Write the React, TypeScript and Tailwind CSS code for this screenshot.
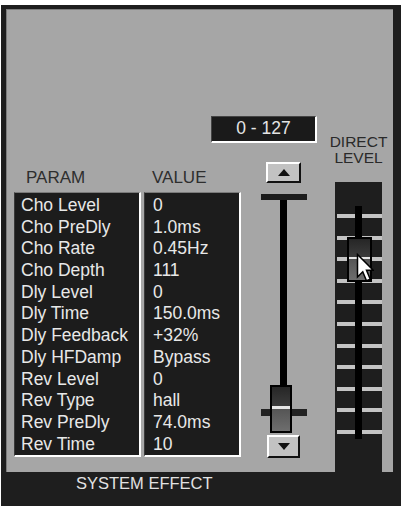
import React from "react";

const rows: [string, string][] = [
  ["Cho Level", "0"],
  ["Cho PreDly", "1.0ms"],
  ["Cho Rate", "0.45Hz"],
  ["Cho Depth", "111"],
  ["Dly Level", "0"],
  ["Dly Time", "150.0ms"],
  ["Dly Feedback", "+32%"],
  ["Dly HFDamp", "Bypass"],
  ["Rev Level", "0"],
  ["Rev Type", "hall"],
  ["Rev PreDly", "74.0ms"],
  ["Rev Time", "10"],
];

const ticks = [32, 54, 76, 98, 119, 141, 162, 183, 205, 227, 248];

const font = "font-['Liberation_Sans',Arial,sans-serif]";
const listBox =
  "h-[265px] pt-[2px] bg-[#1c1c1c] border-t border-l border-t-[#7a7a7a] border-l-[#3a3a3a] border-b-2 border-r-2 border-b-white border-r-white";
const button =
  "flex items-center justify-center bg-[#c2c2c2] border-t-2 border-l-2 border-t-white border-l-white border-b-2 border-r-2 border-b-[#111] border-r-[#111]";

function Thumb({ className }: { className: string }) {
  return (
    <div
      className={`border-2 border-black bg-[linear-gradient(to_bottom,#262626_0%,#3c3c3c_44%,#e6e6e6_44%,#e6e6e6_50%,#555_50%,#6e6e6e_100%)] ${className}`}
    />
  );
}

export default function App() {
  return (
    <div className={`w-[401px] h-[509px] bg-white pt-[5px] pl-[1px] ${font}`}>
      <div className="w-[400px] h-[501px] bg-[#1e1e1e] pl-[5px] pt-[4px] flex flex-col">
        {/* gray panel */}
        <div className="w-[387px] h-[463px] bg-[#a6a6a6] border-t border-l border-[#7c7c7c] flex">
          {/* main area */}
          <div className="w-[328px] flex flex-col">
            <div className="mt-[106px] ml-[204px] w-[106px] h-[27px] bg-[#1a1a1a] border-t border-l border-[#444] border-b-2 border-r-2 border-b-white border-r-white flex items-center justify-center text-[#e4e4e4] text-[17.5px] leading-none">
              0 - 127
            </div>
            <div className="flex items-start">
              {/* table */}
              <div className="ml-[7px] flex flex-col">
                <div className="h-[49px] pt-[25px] flex text-[17px] leading-[20px] text-[#2e2e2e]">
                  <div className="w-[130px] pl-[12px]">PARAM</div>
                  <div className="pl-[8px]">VALUE</div>
                </div>
                <div className="flex gap-[3px]">
                  <div className={`w-[127px] pl-[6px] ${listBox}`}>
                    {rows.map(([p]) => (
                      <div
                        key={p}
                        className="h-[21.7px] leading-[21.7px] text-[17.5px] text-[#e8e8e8] whitespace-nowrap"
                      >
                        {p}
                      </div>
                    ))}
                  </div>
                  <div className={`w-[97px] pl-[8px] ${listBox}`}>
                    {rows.map(([p, v]) => (
                      <div
                        key={p}
                        className="h-[21.7px] leading-[21.7px] text-[17.5px] text-[#e8e8e8] whitespace-nowrap"
                      >
                        {v}
                      </div>
                    ))}
                  </div>
                </div>
              </div>
              {/* small fader */}
              <div className="ml-[20px] mt-[19px] w-[46px] flex flex-col">
                <div className={`ml-[5px] w-[35px] h-[21px] ${button}`}>
                  <svg width="12" height="7" viewBox="0 0 12 7">
                    <path d="M0 7 L6 0 L12 7 Z" fill="#111" />
                  </svg>
                </div>
                <div className="mt-[11px] w-[46px] h-[6px] bg-[#1c1c1c]" />
                <div className="ml-[19px] w-[7px] h-[185px] bg-black" />
                <div className="relative ml-[9px] w-[22px] h-[48px]">
                  <div className="absolute left-[-9px] top-[24px] w-[46px] h-[7px] bg-[#222]" />
                  <Thumb className="relative w-[22px] h-[48px] bg-[linear-gradient(to_bottom,#262626_0%,#3a3a3a_50%,#e6e6e6_50%,#e6e6e6_55%,#555_55%,#6a6a6a_100%)]" />
                </div>
                <div className={`mt-[2px] ml-[6px] w-[33px] h-[23px] ${button}`}>
                  <svg width="12" height="7" viewBox="0 0 12 7">
                    <path d="M0 0 L12 0 L6 7 Z" fill="#111" />
                  </svg>
                </div>
              </div>
            </div>
          </div>

          {/* direct level column */}
          <div className="w-[47px] flex flex-col">
            <div className="h-[172px] pt-[124px] flex flex-col items-center text-[15.5px] leading-[16px] text-[#2a2a2a] whitespace-nowrap">
              <div>DIRECT</div>
              <div>LEVEL</div>
            </div>
            <div className="relative flex-1 bg-[#1e1e1e]">
              <div className="flex flex-col">
                {ticks.map((t, i) => (
                  <div
                    key={t}
                    className={`flex justify-between h-[4px] ${i === 0 ? "mt-[32px]" : "mt-[17.6px]"}`}
                  >
                    <div className="ml-[2px] w-[18px] bg-[#c4c4c4]" />
                    <div className="w-[20px] bg-[#c4c4c4]" />
                  </div>
                ))}
              </div>
              <div className="absolute left-[20px] top-[24px] w-[7px] h-[233px] bg-black" />
              <Thumb className="absolute left-[12px] top-[55px] w-[25px] h-[45px]" />
              <svg
                className="absolute left-[21px] top-[71px]"
                width="18"
                height="30"
                viewBox="0 0 12 20"
              >
                <path
                  d="M1 1 L1 16 L4.5 12.5 L7 18.5 L9.5 17.5 L7 11.5 L11.5 11.5 Z"
                  fill="#fff"
                  stroke="#000"
                  strokeWidth="1"
                  strokeLinejoin="miter"
                />
              </svg>
            </div>
          </div>
          <div className="w-[11px]" />
        </div>

        {/* footer */}
        <div className="pt-[1px] pl-[70px] text-[16.5px] leading-[20px] text-[#e2e2e2]">
          SYSTEM EFFECT
        </div>
      </div>
    </div>
  );
}
